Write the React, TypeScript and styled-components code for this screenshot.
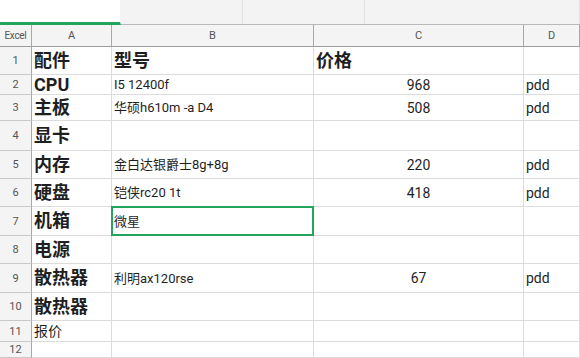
import styled, { createGlobalStyle } from "styled-components";

const GlobalStyle = createGlobalStyle`
    html, body {
        margin: 0;
        padding: 0;
        background: #fff;
        overflow: hidden;
    }
    body {
        font-family: Roboto, "Noto Sans CJK SC", sans-serif;
    }
`;

const Page = styled.div`
    width: 580px;
    height: 358px;
    display: flex;
    flex-direction: column;
    overflow: hidden;
`;

const TabBar = styled.div`
    height: 25px;
    flex: none;
    display: flex;
    background: #f3f3f3;
    border-bottom: 1px solid #b9b9b9;
    box-sizing: border-box;
`;

const Tab = styled.div<{ $active?: boolean; $width?: number }>`
    width: ${(p) => (p.$width ? `${p.$width}px` : "auto")};
    flex: ${(p) => (p.$width ? "none" : "1")};
    box-sizing: border-box;
    background: ${(p) => (p.$active ? "#fff" : "#f3f3f3")};
    border-right: 1px solid ${(p) => (p.$active ? "#f3f3f3" : "#e2e2e2")};
    border-bottom: ${(p) => (p.$active ? "3px solid #22a45d" : "none")};
    margin-bottom: ${(p) => (p.$active ? "-1px" : "0")};
`;

const Sheet = styled.div`
    flex: 1;
    display: grid;
    grid-template-columns: 32px 80px 202px 210px 1fr;
    grid-template-rows: 22px 28px 20px 26px 30px 28px 28px 29px 28px 29px 28px 21px 1fr;
    position: relative;
`;

const ColHead = styled.div<{ $corner?: boolean }>`
    background: #f4f4f4;
    border-right: 1px solid #a8a8a8;
    border-bottom: 1px solid #9c9c9c;
    display: flex;
    align-items: center;
    justify-content: center;
    font-size: ${(p) => (p.$corner ? "10px" : "11px")};
    color: #555;
    letter-spacing: ${(p) => (p.$corner ? "-0.3px" : "0")};
`;

const RowHead = styled.div`
    background: #f4f4f4;
    border-right: 1px solid #a8a8a8;
    border-bottom: 1px solid #c9c9c9;
    display: flex;
    align-items: center;
    justify-content: center;
    font-size: 11px;
    color: #555;
`;

const Cell = styled.div<{ $align?: "left" | "center"; $size?: number; $bold?: boolean; $selected?: boolean }>`
    position: relative;
    border-right: 1px solid #dcdcdc;
    border-bottom: 1px solid #dcdcdc;
    display: flex;
    align-items: center;
    justify-content: ${(p) => (p.$align === "center" ? "center" : "flex-start")};
    padding: 0 2px;
    font-size: ${(p) => p.$size || 13}px;
    font-weight: ${(p) => (p.$bold ? 700 : 400)};
    color: #1f1f1f;
    line-height: 1;
    white-space: nowrap;
    min-width: 0;
    &::after {
        content: "";
        display: ${(p) => (p.$selected ? "block" : "none")};
        position: absolute;
        inset: -1px -1px -1px -1px;
        border: 2px solid #22a45d;
        pointer-events: none;
    }
`;

type Row = {
    name: string;
    strong?: boolean;
    model?: string;
    price?: string;
    shop?: string;
    height?: number;
};

const rows: Row[] = [
    { name: "配件", strong: true, model: "型号", price: "价格" },
    { name: "CPU", strong: true, model: "I5 12400f", price: "968", shop: "pdd" },
    { name: "主板", strong: true, model: "华硕h610m -a D4", price: "508", shop: "pdd" },
    { name: "显卡", strong: true },
    { name: "内存", strong: true, model: "金白达银爵士8g+8g", price: "220", shop: "pdd" },
    { name: "硬盘", strong: true, model: "铠侠rc20 1t", price: "418", shop: "pdd" },
    { name: "机箱", strong: true, model: "微星" },
    { name: "电源", strong: true },
    { name: "散热器", strong: true, model: "利明ax120rse", price: "67", shop: "pdd" },
    { name: "散热器", strong: true },
    { name: "报价" },
    { name: "" },
];

const App = () => {
    return (
        <Page>
            <GlobalStyle />
            <TabBar>
                <Tab $active $width={121} />
                <Tab $width={122} />
                <Tab $width={122} />
                <Tab />
            </TabBar>
            <Sheet>
                <ColHead $corner>Excel</ColHead>
                <ColHead>A</ColHead>
                <ColHead>B</ColHead>
                <ColHead>C</ColHead>
                <ColHead>D</ColHead>

                {rows.map((row, idx) => {
                    const header = idx === 0;
                    return [
                        <RowHead key={`h${idx}`}>{idx + 1}</RowHead>,
                        <Cell key={`a${idx}`} $bold={row.strong} $size={row.strong ? 18 : 14}>
                            {row.name}
                        </Cell>,
                        <Cell
                            key={`b${idx}`}
                            $bold={header}
                            $size={header ? 18 : 13}
                            $selected={idx === 6}
                        >
                            {row.model}
                        </Cell>,
                        <Cell
                            key={`c${idx}`}
                            $bold={header}
                            $size={header ? 18 : 14}
                            $align={header ? "left" : "center"}
                        >
                            {row.price}
                        </Cell>,
                        <Cell key={`d${idx}`} $size={14}>
                            {row.shop}
                        </Cell>,
                    ];
                })}
            </Sheet>
        </Page>
    );
};

export default App;
